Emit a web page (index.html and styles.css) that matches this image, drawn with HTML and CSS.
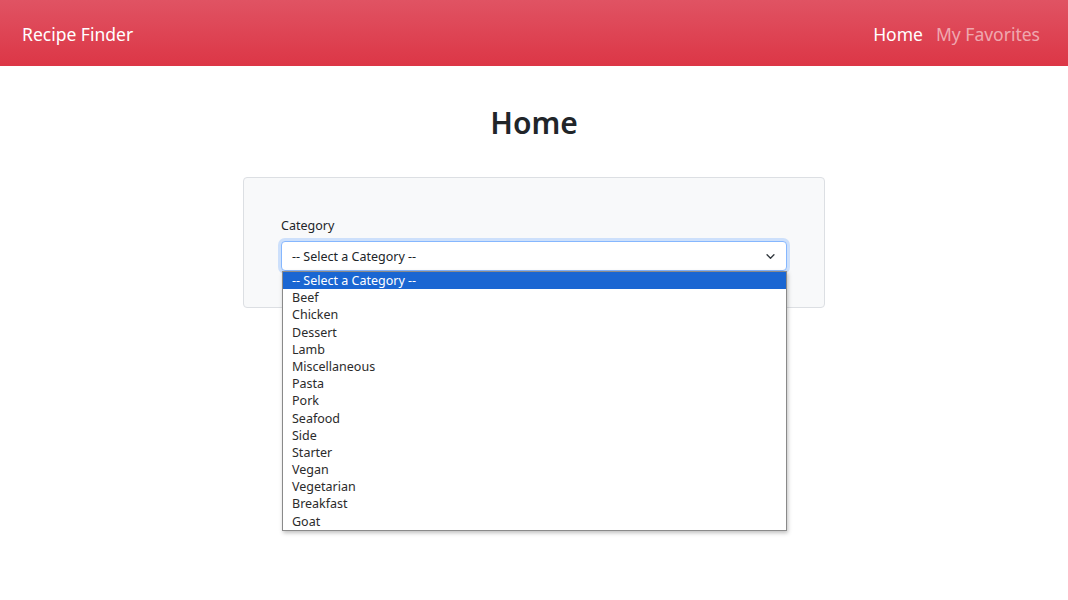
FILE: index.html
```html
<!DOCTYPE html>
<html lang="en">
<head>
    <meta charset="UTF-8">
    <meta name="viewport" content="width=device-width, initial-scale=1.0">
    <title>Recipe Finder</title>
    <link rel="stylesheet" href="styles.css">
</head>
<body>

    <!-- Top navigation -->
    <nav class="navbar">
        <a class="brand" href="#">Recipe Finder</a>
        <div class="nav-links">
            <a class="nav-link active" href="#">Home</a>
            <a class="nav-link" href="#">My Favorites</a>
        </div>
    </nav>

    <main class="page">
        <h1>Home</h1>

        <div class="search-card">
            <label class="field-label" for="category">Category</label>
            <div class="select-wrap">
                <div class="select-box" id="category">
                    <span>-- Select a Category --</span>
                    <svg class="chevron" viewBox="0 0 16 16" width="16" height="16">
                        <path d="m3 5.5 5 5 5-5" fill="none" stroke="#343a40" stroke-width="2" stroke-linecap="round" stroke-linejoin="round"/>
                    </svg>
                </div>

                <!-- open dropdown list -->
                <ul class="option-list">
                    <li class="selected">-- Select a Category --</li>
                    <li>Beef</li>
                    <li>Chicken</li>
                    <li>Dessert</li>
                    <li>Lamb</li>
                    <li>Miscellaneous</li>
                    <li>Pasta</li>
                    <li>Pork</li>
                    <li>Seafood</li>
                    <li>Side</li>
                    <li>Starter</li>
                    <li>Vegan</li>
                    <li>Vegetarian</li>
                    <li>Breakfast</li>
                    <li>Goat</li>
                </ul>
            </div>
        </div>
    </main>

</body>
</html>
```

FILE: styles.css
```css
html, body {
    min-height: 100vh;
}

body {
    font-family: "Noto Sans", "Open Sans", sans-serif;
    background-color: #fff;
    color: #212529;
    margin: 0;
    padding: 0;
}

.navbar {
    height: 66px;
    display: flex;
    align-items: center;
    justify-content: space-between;
    padding: 2px 28px 0 22px;
    background: linear-gradient(to bottom, #e05363, #dc3646);
    box-sizing: border-box;
}

.brand {
    color: #fff;
    font-size: 17.5px;
    text-decoration: none;
}

.nav-links {
    display: flex;
    gap: 13px;
}

.nav-link {
    color: rgba(255, 255, 255, 0.55);
    font-size: 17.5px;
    text-decoration: none;
}

.nav-link.active {
    color: #fff;
}

.page {
    display: flex;
    flex-direction: column;
    align-items: center;
}

h1 {
    font-size: 30px;
    font-weight: 600;
    line-height: 1.2;
    margin: 39px 0 36px;
    color: #212529;
}

.search-card {
    width: 582px;
    height: 131px;
    background-color: #f8f9fa;
    border: 1px solid #dcdfe3;
    border-radius: 4px;
    padding: 38px 37px 0 37px;
    box-sizing: border-box;
}

.field-label {
    display: block;
    font-size: 12.5px;
    line-height: 20px;
    margin-bottom: 5px;
}

.select-wrap {
    position: relative;
}

.select-box {
    height: 30px;
    display: flex;
    align-items: center;
    justify-content: space-between;
    padding: 0 10px 0 10px;
    font-size: 12.5px;
    background-color: #fff;
    border: 1px solid #86b7fe;
    border-radius: 4px;
    box-shadow: 0 0 0 3px rgba(13, 110, 253, 0.18);
    box-sizing: border-box;
}

.chevron {
    width: 11px;
    height: 11px;
}

.option-list {
    position: absolute;
    top: 30px;
    left: 1px;
    right: 0;
    z-index: 10;
    margin: 0;
    padding: 0;
    list-style: none;
    background-color: #fff;
    border: 1px solid #8a8a8a;
    box-shadow: 1px 2px 4px rgba(0, 0, 0, 0.25);
    font-size: 12.5px;
}

.option-list li {
    height: 17.2px;
    line-height: 17px;
    padding-left: 9px;
    color: #2b2b2b;
    white-space: nowrap;
}

.option-list li.selected {
    background-color: #1a66d2;
    color: #fff;
}
```
